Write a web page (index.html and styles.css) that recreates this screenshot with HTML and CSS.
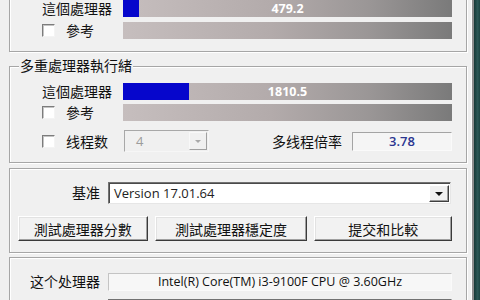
FILE: index.html
```html
<!DOCTYPE html>
<html lang="zh">
<head>
    <meta charset="UTF-8">
    <meta name="viewport" content="width=device-width, initial-scale=1.0">
    <title>CPU-Z - 測試</title>
    <link rel="stylesheet" href="styles.css">
</head>
<body>
    <div class="screen">
        <div class="window">
            <div class="panel">
                <!-- single thread group, its title is scrolled out of view -->
                <div class="group single">
                    <div class="bench-rows">
                        <div class="bench-row">
                            <span class="label">這個處理器</span>
                            <div class="bar">
                                <div class="bar-fill" style="width: 5%"></div>
                                <span class="bar-value">479.2</span>
                            </div>
                        </div>
                        <div class="bench-row">
                            <label class="check"><span class="box"></span>參考</label>
                            <div class="bar"></div>
                        </div>
                    </div>
                </div>

                <div class="group multi">
                    <div class="group-title">多重處理器執行緒</div>
                    <div class="bench-rows">
                        <div class="bench-row">
                            <span class="label">這個處理器</span>
                            <div class="bar">
                                <div class="bar-fill" style="width: 20%"></div>
                                <span class="bar-value">1810.5</span>
                            </div>
                        </div>
                        <div class="bench-row">
                            <label class="check"><span class="box"></span>參考</label>
                            <div class="bar"></div>
                        </div>
                        <div class="thread-row">
                            <label class="check"><span class="box"></span>线程数</label>
                            <div class="combo disabled">
                                <span class="combo-text">4</span>
                                <span class="combo-btn"><span class="arrow"></span></span>
                            </div>
                            <span class="ratio-label">多线程倍率</span>
                            <div class="field ratio">3.78</div>
                        </div>
                    </div>
                </div>

                <div class="group settings">
                    <div class="form-row">
                        <span class="form-label">基准</span>
                        <div class="combo">
                            <span class="combo-text">Version 17.01.64</span>
                            <span class="combo-btn"><span class="arrow"></span></span>
                        </div>
                    </div>
                    <div class="buttons">
                        <button class="btn btn-score">測試處理器分數</button>
                        <button class="btn btn-stress">測試處理器穩定度</button>
                        <button class="btn btn-submit">提交和比較</button>
                    </div>
                </div>

                <div class="group processor">
                    <div class="form-row">
                        <span class="form-label">这个处理器</span>
                        <div class="field cpu-name">Intel(R) Core(TM) i3-9100F CPU @ 3.60GHz</div>
                    </div>
                    <div class="form-row">
                        <span class="form-label"></span>
                        <div class="combo ref"></div>
                    </div>
                </div>
            </div>
        </div>
        <div class="strip"></div>
    </div>
</body>
</html>
```

FILE: styles.css
```css
* {
    margin: 0;
    padding: 0;
    box-sizing: border-box;
}

body {
    width: 480px;
    height: 300px;
    overflow: hidden;
    background-color: #1f4644;
    font-family: "Open Sans", "Noto Sans CJK SC", sans-serif;
    font-size: 14px;
    color: #111;
}

.screen {
    display: flex;
    height: 300px;
}

.window {
    flex: none;
    width: 474px;
    height: 300px;
    overflow: hidden;
    background-color: #f0f0f0;
    border-right: 2px solid #8c8c8c;
    box-shadow: inset -1px 0 0 #fafafa;
    padding: 0 5px 0 9px;
}

.strip {
    flex: 1;
    background: linear-gradient(90deg, #173837, #2b5755 60%, #1c4341);
}

.panel {
    margin-top: -17px;
}

/* group boxes */
.group {
    border: 1px solid #a6a6a6;
    box-shadow: 1px 1px 0 #fff, inset 1px 1px 0 #fff;
}

.group-title {
    width: max-content;
    margin: -11px 0 0 9px;
    padding: 0 1px;
    line-height: 20px;
    background-color: #f0f0f0;
}

.bench-rows {
    padding: 7px 14px 12px 31px;
}

.single .bench-rows {
    padding-top: 16px;
}

.multi {
    margin-top: 14px;
}

.multi .bench-rows {
    padding-bottom: 10px;
}

.bench-row {
    display: grid;
    grid-template-columns: 82px 1fr;
    align-items: center;
    height: 17px;
}

.bench-row + .bench-row {
    margin-top: 5px;
}

.multi .bench-row + .bench-row {
    margin-top: 4px;
}

.label {
    line-height: 17px;
    margin-left: 1px;
}

.bar {
    display: grid;
    height: 17px;
    background: linear-gradient(90deg, #c6bebe, #b3abab 45%, #9a9696 75%, #7a7a7a);
}

.bar > * {
    grid-area: 1 / 1;
}

.bar-fill {
    height: 17px;
    background-color: #0606cc;
}

.bar-value {
    justify-self: center;
    align-self: center;
    color: #fff;
    font-weight: bold;
    font-size: 12.5px;
    line-height: 17px;
}

.check {
    display: flex;
    align-items: center;
    gap: 11px;
    line-height: 17px;
    margin-left: 1px;
}

.box {
    width: 13px;
    height: 13px;
    background-color: #fff;
    border: 1px solid;
    border-color: #7c7c7c #f4f4f4 #f4f4f4 #7c7c7c;
    box-shadow: inset 1px 1px 0 #c4c4c4;
}

.thread-row {
    display: flex;
    align-items: center;
    height: 22px;
    margin-top: 9px;
}

.thread-row .check {
    width: 82px;
}

.ratio-label {
    margin-left: auto;
    margin-right: 10px;
}

.field {
    background-color: #f5f5f5;
    border: 1px solid;
    border-color: #a4a4a4 #fafafa #fafafa #a4a4a4;
    text-align: center;
    font-size: 13px;
}

.ratio {
    width: 100px;
    height: 19px;
    line-height: 17px;
    color: #2a3590;
    font-weight: 600;
}

/* combo boxes */
.combo {
    display: flex;
    align-items: stretch;
    height: 22px;
    background-color: #fff;
    border: 1px solid;
    border-color: #727272 #e6e6e6 #e6e6e6 #727272;
    box-shadow: inset 1px 1px 0 #4a4a4a;
    padding: 2px 1px 1px 2px;
}

.combo-text {
    flex: 1;
    font-size: 13px;
    line-height: 17px;
    padding-left: 3px;
    color: #222;
}

.combo-btn {
    display: flex;
    align-items: center;
    justify-content: center;
    width: 20px;
    background-color: #f0f0f0;
    border: 1px solid;
    border-color: #fff #3e3e3e #3e3e3e #fff;
    box-shadow: inset -1px -1px 0 #9a9a9a;
}

.arrow {
    width: 0;
    height: 0;
    border-left: 4px solid transparent;
    border-right: 4px solid transparent;
    border-top: 4px solid #111;
}

.combo.disabled {
    width: 85px;
    background-color: #f0f0f0;
    border-color: #a8a8a8 #f6f6f6 #f6f6f6 #a8a8a8;
    box-shadow: none;
    padding: 1px;
}

.combo.disabled .combo-text {
    color: #9c9c9c;
    padding-left: 10px;
    line-height: 18px;
}

.combo.disabled .combo-btn {
    width: 18px;
    border-color: #f8f8f8 #a0a0a0 #a0a0a0 #f8f8f8;
    box-shadow: none;
}

.combo.disabled .arrow {
    border-top-color: #a8a8a8;
    border-left-width: 3px;
    border-right-width: 3px;
    border-top-width: 3px;
}

/* settings and processor */
.settings {
    margin-top: 5px;
    padding: 13px 14px 11px 8px;
}

.form-row {
    display: grid;
    grid-template-columns: 82px 1fr;
    column-gap: 8px;
    align-items: center;
}

.form-label {
    text-align: right;
    line-height: 20px;
}

.settings .combo {
    margin-right: 1px;
}

.buttons {
    display: flex;
    gap: 7px;
    margin-top: 12px;
}

.btn {
    height: 25px;
    font-family: inherit;
    font-size: 14px;
    color: #111;
    background-color: #f2f2f2;
    border: 1px solid;
    border-color: #fff #3a3a3a #3a3a3a #fff;
    box-shadow: inset -1px -1px 0 #a0a0a0, inset 1px 1px 0 #e2e2e2;
}

.btn-score {
    width: 130px;
}

.btn-stress {
    width: 153px;
}

.btn-submit {
    width: 138px;
}

.processor {
    margin-top: 4px;
    padding: 14px 14px 0 8px;
}

.cpu-name {
    height: 18px;
    line-height: 16px;
    font-size: 12.5px;
    color: #111;
    background-color: #f7f7f7;
    border-color: #c4c4c4 #fafafa #fafafa #c4c4c4;
}

.processor .form-row + .form-row {
    margin-top: 7px;
}

.combo.ref {
    height: 20px;
}
```
